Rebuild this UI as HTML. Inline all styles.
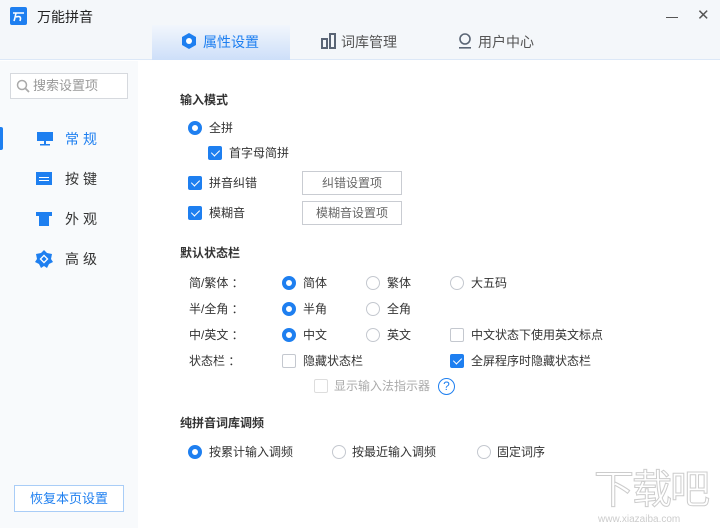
<!DOCTYPE html>
<html><head><meta charset="utf-8"><style>
*{margin:0;padding:0;box-sizing:border-box}
body{width:720px;height:528px;overflow:hidden;background:#fff;font-family:"Liberation Sans","Noto Sans CJK SC",sans-serif;font-size:12px;color:#333;position:relative}
.a{position:absolute;white-space:nowrap}
.t{line-height:16px}
.radio{position:absolute;width:14px;height:14px;border-radius:50%;border:1px solid #c4c8cf;background:#fff}
.radio.on{border:4px solid #1e7ff0}
.cb{position:absolute;width:14px;height:14px;border-radius:2px;border:1px solid #c4c8cf;background:#fff}
.cb.on{background:#1e7ff0;border-color:#1e7ff0}
.cb.on::after{content:"";position:absolute;left:4px;top:1px;width:4px;height:7px;border:solid #fff;border-width:0 1px 1px 0;transform:rotate(45deg)}
.btn{position:absolute;border:1px solid #c9ccd2;background:#fff;text-align:center;line-height:22px;color:#666}
.b{font-weight:bold;color:#333}
</style></head><body>
<div class="a" style="left:0;top:0;width:720px;height:60px;background:#f4f7fa;border-bottom:1px solid #dce8f7"></div>
<div class="a" style="left:0;top:61px;width:138px;height:467px;background:#f8fafc"></div>
<svg class="a" style="left:10px;top:7px" width="17" height="18"><rect width="17" height="18" rx="2" fill="#1e7ff0"/><path d="M3 6 H14 M6 6 Q5 11 4 14 M6 10 Q12 8 10 14" fill="none" stroke="#fff" stroke-width="1.6"/></svg>
<div class="a t" style="left:37px;top:9px;font-size:14px;color:#222">万能拼音</div>
<div class="a" style="left:666px;top:17px;width:12px;height:1px;background:#555"></div>
<div class="a" style="left:697px;top:8px;font-size:15px;color:#555;line-height:16px">✕</div>
<div class="a" style="left:152px;top:25px;width:138px;height:35px;background:linear-gradient(#f2f6fc,#cddff9)"></div>
<svg class="a" style="left:182px;top:33px" width="14" height="16" viewBox="0 0 14 16"><polygon points="7,0 14,4 14,12 7,16 0,12 0,4" fill="#1e7ff0"/><circle cx="7" cy="8" r="3" fill="#fff"/></svg>
<div class="a t" style="left:203px;top:34px;font-size:14px;color:#1e7ff0">属性设置</div>
<svg class="a" style="left:321px;top:33px" width="16" height="16"><rect x="1" y="6" width="5" height="9" fill="none" stroke="#5a6575" stroke-width="2"/><rect x="9" y="1" width="5" height="14" fill="none" stroke="#5a6575" stroke-width="2"/></svg>
<div class="a t" style="left:341px;top:34px;font-size:14px;color:#555">词库管理</div>
<svg class="a" style="left:458px;top:33px" width="14" height="16"><circle cx="7" cy="6" r="5" fill="none" stroke="#5a6575" stroke-width="1.6"/><rect x="1" y="14" width="12" height="1.6" fill="#5a6575"/></svg>
<div class="a t" style="left:478px;top:34px;font-size:14px;color:#555">用户中心</div>
<div class="a" style="left:10px;top:73px;width:118px;height:26px;border:1px solid #d6d9de;background:#fff"></div>
<svg class="a" style="left:16px;top:79px" width="15" height="15"><circle cx="6" cy="6" r="4.5" fill="none" stroke="#aaa" stroke-width="1.5"/><line x1="9.5" y1="9.5" x2="13" y2="13" stroke="#aaa" stroke-width="1.8"/></svg>
<div class="a t" style="left:33px;top:78px;font-size:13px;color:#999">搜索设置项</div>
<div class="a" style="left:0;top:127px;width:3px;height:23px;background:#1e7ff0;border-radius:0 2px 2px 0"></div>
<svg class="a" style="left:37px;top:132px" width="16" height="14"><rect x="0" y="0" width="16" height="9" fill="#1e7ff0"/><rect x="7" y="9" width="2" height="3" fill="#1e7ff0"/><rect x="3" y="12" width="10" height="1.5" fill="#1e7ff0"/></svg>
<div class="a t" style="left:65px;top:131px;font-size:14px;color:#1e7ff0;letter-spacing:4px">常规</div>
<svg class="a" style="left:36px;top:172px" width="16" height="13"><rect width="16" height="13" fill="#1e7ff0"/><rect x="3" y="5" width="10" height="1" fill="#fff"/><rect x="3" y="8" width="10" height="1" fill="#fff"/></svg>
<div class="a t" style="left:65px;top:171px;font-size:14px;letter-spacing:4px">按键</div>
<svg class="a" style="left:36px;top:212px" width="16" height="14"><polygon points="0,0 16,0 16,4 13,4 13,14 3,14 3,4 0,4" fill="#1e7ff0"/></svg>
<div class="a t" style="left:65px;top:211px;font-size:14px;letter-spacing:4px">外观</div>
<svg class="a" style="left:35px;top:250px" width="18" height="18"><polygon points="9,0 12,3 17,4 16,9 18,12 14,14 12,18 9,16 6,18 4,14 0,12 2,9 1,4 6,3" fill="#1e7ff0"/><rect x="6.5" y="6.5" width="5" height="5" transform="rotate(45 9 9)" fill="none" stroke="#fff" stroke-width="1.3"/></svg>
<div class="a t" style="left:65px;top:251px;font-size:14px;letter-spacing:4px">高级</div>
<div class="a" style="left:14px;top:485px;width:110px;height:27px;border:1px solid #a9cdf7;background:#fff;color:#1e7ff0;text-align:center;line-height:25px;font-size:13px">恢复本页设置</div>

<div class="a t b" style="left:180px;top:92px">输入模式</div>
<div class="radio on" style="left:188px;top:121px"></div><div class="a t" style="left:209px;top:120px">全拼</div>
<div class="cb on" style="left:208px;top:146px"></div><div class="a t" style="left:229px;top:145px">首字母简拼</div>
<div class="cb on" style="left:188px;top:176px"></div><div class="a t" style="left:209px;top:175px">拼音纠错</div>
<div class="btn" style="left:302px;top:171px;width:100px;height:24px">纠错设置项</div>
<div class="cb on" style="left:188px;top:206px"></div><div class="a t" style="left:209px;top:205px">模糊音</div>
<div class="btn" style="left:302px;top:201px;width:100px;height:24px">模糊音设置项</div>

<div class="a t b" style="left:180px;top:245px">默认状态栏</div>
<div class="a t" style="left:189px;top:275px">简/繁体 ：</div>
<div class="radio on" style="left:282px;top:276px"></div><div class="a t" style="left:303px;top:275px">简体</div>
<div class="radio" style="left:366px;top:276px"></div><div class="a t" style="left:387px;top:275px">繁体</div>
<div class="radio" style="left:450px;top:276px"></div><div class="a t" style="left:471px;top:275px">大五码</div>
<div class="a t" style="left:189px;top:301px">半/全角 ：</div>
<div class="radio on" style="left:282px;top:302px"></div><div class="a t" style="left:303px;top:301px">半角</div>
<div class="radio" style="left:366px;top:302px"></div><div class="a t" style="left:387px;top:301px">全角</div>
<div class="a t" style="left:189px;top:327px">中/英文 ：</div>
<div class="radio on" style="left:282px;top:328px"></div><div class="a t" style="left:303px;top:327px">中文</div>
<div class="radio" style="left:366px;top:328px"></div><div class="a t" style="left:387px;top:327px">英文</div>
<div class="cb" style="left:450px;top:328px"></div><div class="a t" style="left:471px;top:327px">中文状态下使用英文标点</div>
<div class="a t" style="left:189px;top:353px">状态栏 ：</div>
<div class="cb" style="left:282px;top:354px"></div><div class="a t" style="left:303px;top:353px">隐藏状态栏</div>
<div class="cb on" style="left:450px;top:354px"></div><div class="a t" style="left:471px;top:353px">全屏程序时隐藏状态栏</div>
<div class="cb" style="left:314px;top:379px;border-color:#ddd"></div><div class="a t" style="left:334px;top:378px;color:#aaa">显示输入法指示器</div>
<div class="a" style="left:438px;top:378px;width:17px;height:17px;border:1.5px solid #1e7ff0;border-radius:50%;color:#1e7ff0;font-size:12px;line-height:14px;text-align:center">?</div>

<div class="a t b" style="left:180px;top:415px">纯拼音词库调频</div>
<div class="radio on" style="left:188px;top:445px"></div><div class="a t" style="left:209px;top:444px">按累计输入调频</div>
<div class="radio" style="left:332px;top:445px"></div><div class="a t" style="left:352px;top:444px">按最近输入调频</div>
<div class="radio" style="left:477px;top:445px"></div><div class="a t" style="left:497px;top:444px">固定词序</div>

<div class="a" style="left:594px;top:468px;font-size:40px;line-height:44px;color:#fff;-webkit-text-stroke:1px #ccc;letter-spacing:-2px">下载吧</div>
<div class="a" style="left:598px;top:514px;font-size:10px;color:#ccc;line-height:12px">www.xiazaiba.com</div>
</body></html>
